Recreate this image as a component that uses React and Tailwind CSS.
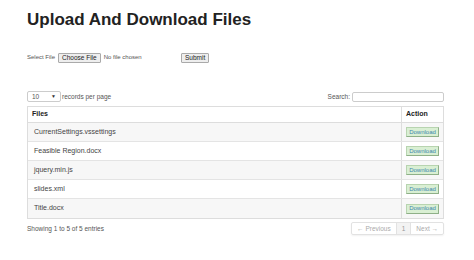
import React from "react";

const files = [
  "CurrentSettings.vssettings",
  "Feasible Region.docx",
  "jquery.min.js",
  "slides.xml",
  "Title.docx",
];

const App = () => {
  return (
    <div className="w-[474px] h-[260px] overflow-hidden bg-white text-[#333] font-['Liberation_Sans',Arial,sans-serif] pl-[27px] pr-[30px] pt-[10px]">

      {/* Title */}
      <h1 className="text-[17px] leading-[20px] font-bold text-[#222]">Upload And Download Files</h1>

      {/* Upload form */}
      <div className="flex items-center mt-[22px] h-[11px] text-[6px] text-[#555]">
        <span className="w-[31px]">Select File</span>
        <div className="flex items-center w-[123px]">
          <span className="h-[10px] px-[3px] flex items-center border border-[#aaa] bg-[#eee] text-[#222] text-[6.5px] rounded-[1px]">
            Choose File
          </span>
          <span className="ml-[3px]">No file chosen</span>
        </div>
        <span className="h-[10px] px-[3px] flex items-center border border-[#aaa] bg-[#eee] text-[#222] text-[6.5px] rounded-[1px]">
          Submit
        </span>
      </div>

      {/* Length + search */}
      <div className="flex items-center justify-between mt-[28px] h-[11px] text-[6.5px] text-[#555]">
        <div className="flex items-center">
          <div className="w-[34px] h-[11px] border border-[#ccc] rounded-[2px] flex items-center justify-between px-[4px]">
            <span>10</span>
            <span className="text-[5px] text-[#333]">▼</span>
          </div>
          <span className="ml-[1px]">records per page</span>
        </div>
        <div className="flex items-center">
          <span>Search:</span>
          <div className="ml-[2px] w-[92px] h-[10px] border border-[#ccc] rounded-[2px]"></div>
        </div>
      </div>

      {/* Table */}
      <div className="mt-[4px] border border-[#ddd] text-[7px]">
        <div className="flex h-[16px] border-b border-[#ddd] font-bold text-[#222]">
          <div className="flex-1 flex items-center pl-[4px]">Files</div>
          <div className="w-[42px] flex items-center pl-[4px] border-l border-[#ddd]">Action</div>
        </div>
        {files.map((name, i) => (
          <div
            key={name}
            className={`flex h-[19px] ${i < files.length - 1 ? "border-b border-[#e4e4e4]" : ""} ${i % 2 === 0 ? "bg-[#f7f7f7]" : "bg-white"}`}
          >
            <div className="flex-1 flex items-center pl-[6px] text-[#444]">{name}</div>
            <div className="w-[42px] flex items-center pl-[4px] border-l border-[#ddd]">
              <span className="h-[10px] w-[33px] flex items-center justify-center bg-[#d9efd3] border border-[#b8d4b0] border-r-[#8fb088] border-b-[#8fb088] text-[#3f86ad] text-[6px]">
                Download
              </span>
            </div>
          </div>
        ))}
      </div>

      {/* Footer */}
      <div className="flex items-center justify-between mt-[3px] text-[6.5px] text-[#555]">
        <span>Showing 1 to 5 of 5 entries</span>
        <div className="flex h-[13px] border border-[#e2e2e2] rounded-[2px] shadow-[0_1px_2px_rgba(0,0,0,0.06)] text-[#aaa]">
          <span className="flex items-center px-[5px]">← Previous</span>
          <span className="flex items-center px-[5px] bg-[#f3f3f3] border-l border-r border-[#e2e2e2] text-[#999]">1</span>
          <span className="flex items-center px-[5px]">Next →</span>
        </div>
      </div>
    </div>
  );
};

export default App;
